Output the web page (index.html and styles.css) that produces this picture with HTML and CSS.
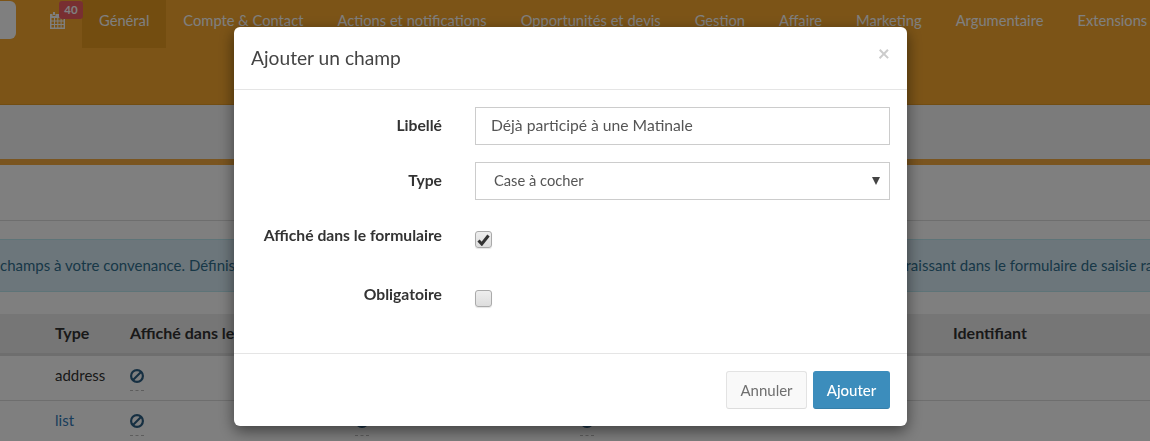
FILE: index.html
```html
<!DOCTYPE html>
<html lang="fr">
<head>
<meta charset="utf-8">
<title>Ajouter un champ</title>
<link rel="stylesheet" href="styles.css">
</head>
<body>
<div class="page">
  <header class="topbar">
    <div class="brandbtn"></div>
    <div class="cal">
      <svg width="16" height="17" viewBox="0 0 16 17"><path fill="#fff" fill-rule="evenodd" d="M3 0h2v3H3zM10 0h2v3h-2zM0 2h2.500v2h3V2h4v2h3V2H15v15H0zM1.500 6v2.500H4V6zM5 6v2.500h2.300V6zM8.300 6v2.500h2.300V6zM11.600 6v2.500h2V6zM1.500 9.500V12H4V9.500zM5 9.500V12h2.300V9.500zM8.300 9.500V12h2.300V9.500zM11.600 9.500V12h2V9.500zM1.500 13v2.500H4V13zM5 13v2.500h2.300V13zM8.300 13v2.500h2.300V13zM11.600 13v2.500h2V13z"/></svg>
      <span class="badge">40</span>
    </div>
    <nav class="nav">
      <a class="nav-item active">Général</a>
      <a class="nav-item">Compte &amp; Contact</a>
      <a class="nav-item">Actions et notifications</a>
      <a class="nav-item">Opportunités et devis</a>
      <a class="nav-item">Gestion</a>
      <a class="nav-item">Affaire</a>
      <a class="nav-item">Marketing</a>
      <a class="nav-item">Argumentaire</a>
      <a class="nav-item">Extensions</a>
    </nav>
  </header>
  <div class="subbar"></div>
  <div class="panelhead"></div>
  <div class="alert"><span class="alert-text">champs à votre convenance. Définissez le libellé, le type et le caractère obligatoire de chaque champ personnalisé du contact courant apparaissant dans le formulaire de saisie rapide du contact.</span></div>
  <div class="table">
    <div class="row head">
      <div></div><div>Type</div><div>Affiché dans le formulaire</div><div></div><div></div><div>Identifiant</div>
    </div>
    <div class="row">
      <div></div><div>address</div>
      <div><svg class="ban" viewBox="0 0 14 14"><circle cx="7" cy="7" r="5.900" fill="none" stroke="#2c5f84" stroke-width="2.200"/><path d="M3 11 11 3" stroke="#2c5f84" stroke-width="2.200"/></svg><span class="dash"></span></div>
      <div><svg class="ban" viewBox="0 0 14 14"><circle cx="7" cy="7" r="5.900" fill="none" stroke="#2c5f84" stroke-width="2.200"/><path d="M3 11 11 3" stroke="#2c5f84" stroke-width="2.200"/></svg><span class="dash"></span></div>
      <div><svg class="ban" viewBox="0 0 14 14"><circle cx="7" cy="7" r="5.900" fill="none" stroke="#2c5f84" stroke-width="2.200"/><path d="M3 11 11 3" stroke="#2c5f84" stroke-width="2.200"/></svg><span class="dash"></span></div>
      <div></div>
    </div>
    <div class="row">
      <div></div><div class="link">list</div>
      <div><svg class="ban" viewBox="0 0 14 14"><circle cx="7" cy="7" r="5.900" fill="none" stroke="#2c5f84" stroke-width="2.200"/><path d="M3 11 11 3" stroke="#2c5f84" stroke-width="2.200"/></svg><span class="dash"></span></div>
      <div><svg class="ban" viewBox="0 0 14 14"><circle cx="7" cy="7" r="5.900" fill="none" stroke="#2c5f84" stroke-width="2.200"/><path d="M3 11 11 3" stroke="#2c5f84" stroke-width="2.200"/></svg><span class="dash"></span></div>
      <div><svg class="ban" viewBox="0 0 14 14"><circle cx="7" cy="7" r="5.900" fill="none" stroke="#2c5f84" stroke-width="2.200"/><path d="M3 11 11 3" stroke="#2c5f84" stroke-width="2.200"/></svg><span class="dash"></span></div>
      <div></div>
    </div>
  </div>
</div>
<div class="backdrop"></div>
<div class="modal">
  <div class="modal-head">
    <h4>Ajouter un champ</h4>
    <span class="close">×</span>
  </div>
  <form class="modal-body">
    <div class="field">
      <label class="lab">Libellé</label>
      <input class="ctl" type="text" value="Déjà participé à une Matinale">
    </div>
    <div class="field">
      <label class="lab">Type</label>
      <div class="selwrap">
        <select class="ctl sel"><option>Case à cocher</option></select>
        <span class="arrow"></span>
      </div>
    </div>
    <div class="field chk first">
      <label class="lab">Affiché dans le formulaire</label>
      <span class="box"><svg width="13" height="12" viewBox="0 0 13 12"><path d="M1.500 6.500 4.800 10 11.500 1.500" fill="none" stroke="#333" stroke-width="3"/></svg></span>
    </div>
    <div class="field chk">
      <label class="lab">Obligatoire</label>
      <span class="box"></span>
    </div>
  </form>
  <div class="modal-foot">
    <button class="btn cancel" type="button">Annuler</button>
    <button class="btn primary" type="button">Ajouter</button>
  </div>
</div>
</body>
</html>
```
FILE: styles.css
```css
* { box-sizing: border-box; }
html, body { margin: 0; height: 100%; overflow: hidden; }
body { font-family: "Lato", "Noto Sans", sans-serif; font-size: 15px; color: #333; background: #fff; }
.page { width: 1150px; }
.topbar { height: 105px; background: #f8a92f; border-bottom: 1px solid #e59a25; display: flex; align-items: flex-start; }
.brandbtn { flex: none; width: 16px; height: 38px; margin-top: 1px; background: #fff; border-radius: 0 6px 6px 0; }
.cal { flex: none; position: relative; width: 66px; margin-top: 12px; padding-left: 34px; }
.cal svg { display: block; }
.badge { position: absolute; left: 43px; top: -11px; width: 24px; text-align: center; background: #f05f63; color: #fff; font-size: 11.500px; font-weight: 700; line-height: 18px; border-radius: 3px; }
.nav { flex: none; display: flex; white-space: nowrap; }
.nav-item { padding: 0 17px; height: 48px; line-height: 40px; color: #fff; font-size: 14.700px; }
.nav-item.active { background: #e69a20; }
.subbar { height: 54px; background: #f7f7f7; }
.panelhead { height: 62px; border-top: 6px solid #f4aa40; border-bottom: 1px solid #ddd; background: #fff; }
.alert { margin-top: 18px; height: 53px; line-height: 51px; background: #d9edf7; border: solid #bce8f1; border-width: 1px 0; color: #31708f; font-size: 15px; white-space: nowrap; overflow: hidden; }
.table { margin-top: 22px; }
.row { display: grid; grid-template-columns: 55px 75px 225px 225px 373px 1fr; height: 45px; border-bottom: 1px solid #ddd; background: #fff; align-items: start; padding-top: 10px; color: #333; }
.row.head { height: 42px; background: #ececec; border-bottom: 3px solid #ddd; font-weight: 700; font-size: 16px; padding-top: 9px; }
.link { color: #337ab7; }
.ban { display: block; width: 14px; height: 14px; margin-top: 3px; }
.dash { display: block; width: 14px; margin-top: 7px; border-top: 1px dashed #bbb; }
.backdrop { position: fixed; inset: 0; background: rgba(0,0,0,.5); }
.modal { position: fixed; left: 234px; top: 27px; width: 673px; height: 399px; background: #fff; border-radius: 6px; box-shadow: 0 5px 15px rgba(0,0,0,.5); display: flex; flex-direction: column; }
.modal-head { height: 63px; border-bottom: 1px solid #e5e5e5; padding: 0 17px; display: flex; justify-content: space-between; align-items: center; }
.modal-head h4 { margin: 0 0 2px; font-size: 19.200px; font-weight: 400; color: #444; }
.close { font-size: 21px; font-weight: 700; color: #ccc; line-height: 1; position: relative; top: -6px; }
.modal-body { flex: 1; padding: 17px 17px 0; display: flex; flex-direction: column; gap: 17px; }
.field { display: grid; grid-template-columns: 191px 415px; column-gap: 33px; align-items: center; height: 38px; }
.lab { text-align: right; font-weight: 700; font-size: 15.700px; color: #333; margin-bottom: 2px; }
.ctl { width: 415px; height: 38px; border: 1px solid #ccc; background: #fff; padding: 0 15px 2px; font: inherit; font-size: 15.700px; color: #555; border-radius: 0; }
.selwrap { position: relative; }
.sel { appearance: none; padding-left: 18px; display: block; font-size: 14.700px; }
.arrow { position: absolute; right: 10px; top: 15px; width: 0; height: 0; border: solid transparent; border-width: 8px 4px 0; border-top-color: #444; }
.chk { align-items: start; height: 42px; }
.chk .lab { margin-top: 4px; margin-bottom: 0; }
.chk.first { margin-top: 5px; }
.box { width: 17px; height: 17px; margin-top: 9px; border: 1px solid #aaa; border-radius: 3px; background: linear-gradient(#eee, #ddd); display: flex; align-items: center; justify-content: center; box-shadow: 0 1px 1px rgba(0,0,0,.1); }
.modal-foot { height: 73px; border-top: 1px solid #e5e5e5; padding: 17px 17px 0; display: flex; justify-content: flex-end; gap: 6px; }
.btn { height: 38px; border-radius: 3px; font: inherit; font-size: 15px; border: 1px solid; padding: 0; }
.cancel { width: 81px; background: #f9f9f9; border-color: #e3e3e3; border-bottom-color: #ddd; color: #6f6f6f; }
.primary { width: 77px; background: #3c8dbc; border-color: #3c8dbc; border-bottom-color: #367fa9; color: #fff; font-weight: 500; }
```
